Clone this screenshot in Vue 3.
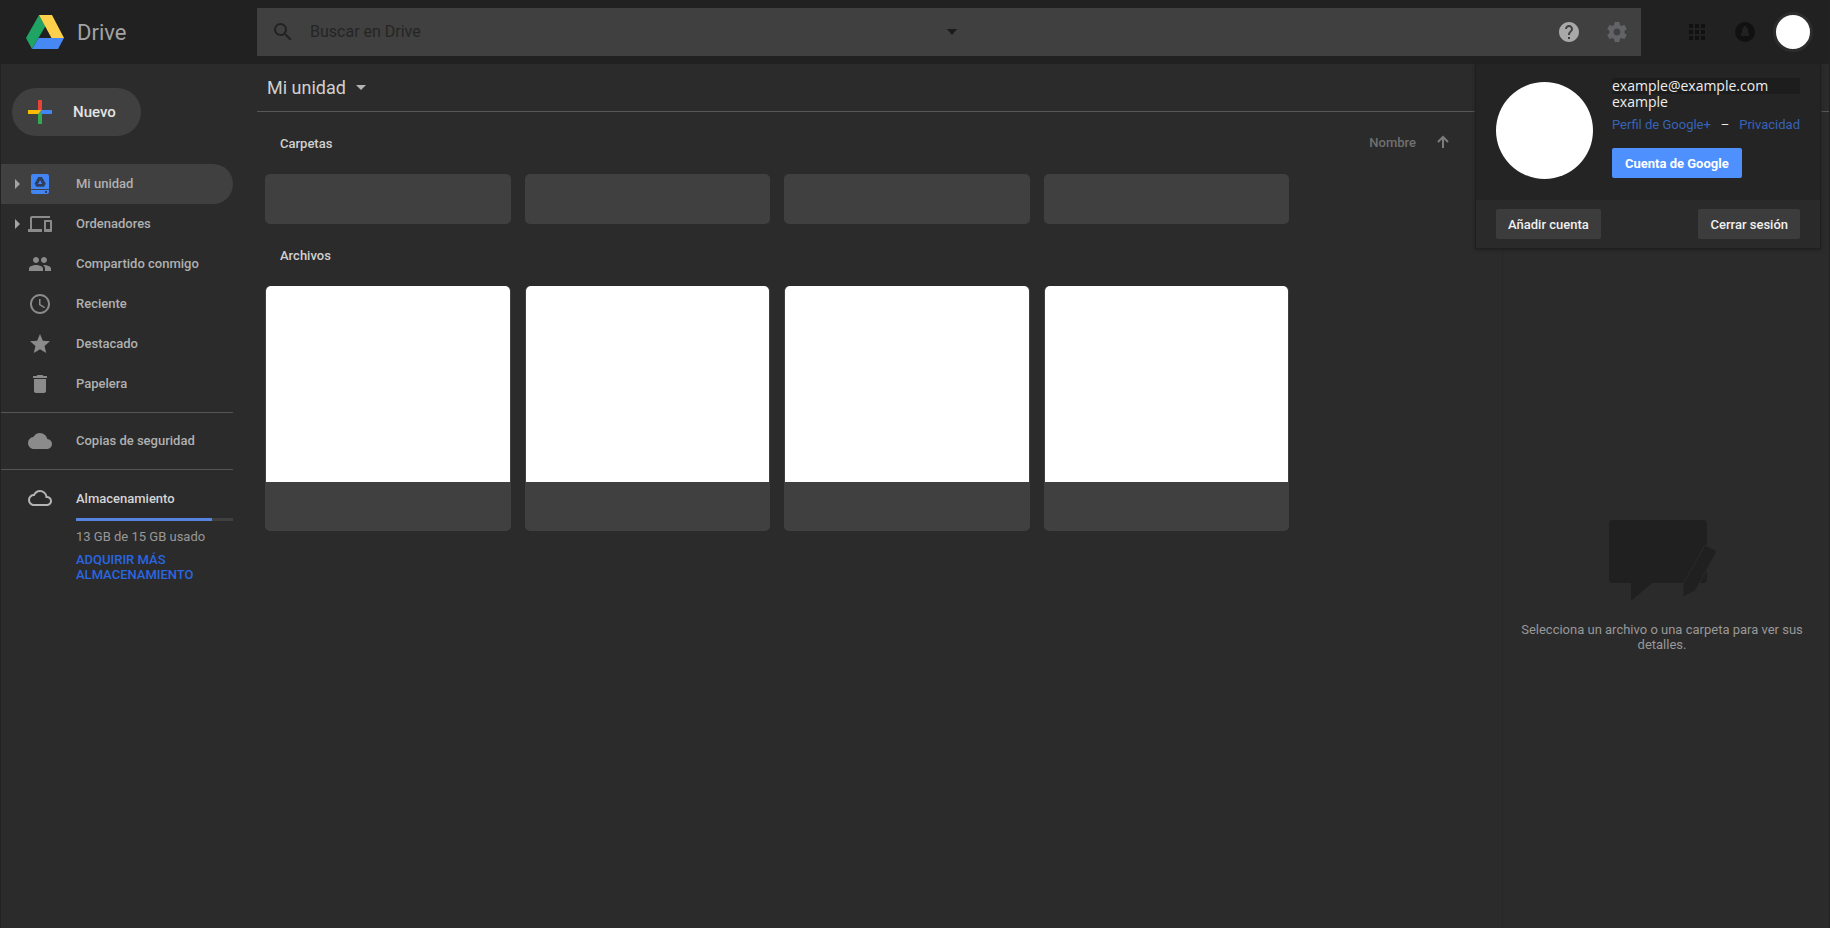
<script setup>
import { ref } from 'vue'

const query = ref('')
const used = 13
const total = 15

const navItems = [
  { label: 'Mi unidad', icon: 'drive', expandable: true, active: true },
  { label: 'Ordenadores', icon: 'devices', expandable: true },
  { label: 'Compartido conmigo', icon: 'people' },
  { label: 'Reciente', icon: 'clock' },
  { label: 'Destacado', icon: 'star' },
  { label: 'Papelera', icon: 'trash' }
]

const icons = {
  devices: 'M4 6h18V4H4c-1.100 0-2 .9-2 2v11H0v3h14v-3H4V6zm19 2h-6c-.55 0-1 .45-1 1v10c0 .55.45 1 1 1h6c.55 0 1-.45 1-1V9c0-.55-.45-1-1-1zm-1 9h-4v-7h4v7z',
  people: 'M16 11c1.660 0 2.990-1.340 2.990-3S17.660 5 16 5s-3 1.340-3 3 1.340 3 3 3zm-8 0c1.660 0 2.990-1.340 2.990-3S9.660 5 8 5 5 6.340 5 8s1.340 3 3 3zm0 2c-2.330 0-7 1.170-7 3.500V19h14v-2.500c0-2.330-4.670-3.500-7-3.500zm8 0c-.29 0-.62.02-.97.05 1.160.840 1.970 1.970 1.970 3.450V19h6v-2.500c0-2.330-4.670-3.500-7-3.500z',
  clock: 'M11.990 2C6.470 2 2 6.480 2 12s4.470 10 9.990 10C17.520 22 22 17.520 22 12S17.520 2 11.990 2zM12 20c-4.420 0-8-3.580-8-8s3.580-8 8-8 8 3.580 8 8-3.580 8-8 8zm.5-13H11v6l5.250 3.150.750-1.230-4.500-2.670z',
  star: 'M12 17.270L18.180 21l-1.640-7.030L22 9.240l-7.190-.61L12 2 9.190 8.630 2 9.240l5.460 4.730L5.820 21z',
  trash: 'M6 19c0 1.100.9 2 2 2h8c1.100 0 2-.9 2-2V7H6v12zM19 4h-3.500l-1-1h-5l-1 1H5v2h14V4z'
}
</script>

<template>
  <div class="page">
    <header class="topbar">
      <a class="brand" href="#">
        <svg class="logo" viewBox="0 0 38 34" aria-hidden="true">
          <path fill="#1fa463" d="M13 0 0 23l6 11 13.500-23z" />
          <path fill="#ffd04b" d="M13 0h13l12 23H25.500z" />
          <path fill="#4688f4" d="M12.500 23H38l-6 11H6z" />
        </svg>
        <span>Drive</span>
      </a>
      <form class="search" @submit.prevent>
        <button class="icon-button submit" type="submit" aria-label="Buscar">
          <svg viewBox="0 0 24 24" width="24" height="24" fill="#222"><path d="M15.500 14h-.79l-.28-.27A6.470 6.470 0 0 0 16 9.500 6.500 6.500 0 1 0 9.500 16c1.610 0 3.090-.59 4.230-1.570l.27.28v.79l5 4.990L20.490 19l-4.990-5zm-6 0C7.010 14 5 11.990 5 9.500S7.010 5 9.500 5 14 7.010 14 9.500 11.990 14 9.500 14z" /></svg>
        </button>
        <input v-model="query" type="text" placeholder="Buscar en Drive" aria-label="Buscar en Drive" />
        <button class="icon-button options" type="button" aria-label="Opciones de búsqueda">
          <svg viewBox="0 0 10 6" width="10" height="6" fill="#1c1c1c"><path d="M0 0h10L5 6z" /></svg>
        </button>
        <span class="search-tools">
          <button class="icon-button" type="button" aria-label="Ayuda">
            <svg viewBox="0 0 24 24" width="24" height="24" fill="#a8a8a8"><path d="M12 2C6.480 2 2 6.480 2 12s4.480 10 10 10 10-4.480 10-10S17.520 2 12 2zm1 17h-2v-2h2v2zm2.070-7.750-.9.920C13.450 12.900 13 13.500 13 15h-2v-.5c0-1.100.45-2.100 1.170-2.830l1.240-1.260c.37-.36.59-.86.59-1.410 0-1.100-.9-2-2-2s-2 .9-2 2H8c0-2.210 1.790-4 4-4s4 1.790 4 4c0 .88-.36 1.680-.93 2.250z" /></svg>
          </button>
          <button class="icon-button" type="button" aria-label="Configuración">
            <svg viewBox="0 0 24 24" width="24" height="24" fill="#626366"><path d="M19.430 12.980c.04-.32.07-.64.07-.98s-.03-.66-.07-.98l2.110-1.650c.19-.15.24-.42.12-.64l-2-3.460c-.12-.22-.39-.3-.61-.22l-2.490 1c-.52-.4-1.080-.73-1.690-.98l-.38-2.650A.488.488 0 0 0 14 2h-4c-.25 0-.46.18-.49.42l-.38 2.650c-.61.25-1.170.59-1.690.98l-2.490-1c-.23-.09-.49 0-.61.22l-2 3.460c-.13.22-.07.49.12.64l2.110 1.650c-.04.32-.07.65-.07.98s.03.66.07.98l-2.110 1.650c-.19.15-.24.42-.12.64l2 3.460c.12.22.39.3.61.22l2.490-1c.52.4 1.080.73 1.690.98l.38 2.650c.03.24.24.42.49.42h4c.25 0 .46-.18.49-.42l.38-2.650c.61-.25 1.170-.59 1.690-.98l2.490 1c.23.09.49 0 .61-.22l2-3.460c.12-.22.07-.49-.12-.64l-2.110-1.650zM12 15.500c-1.930 0-3.500-1.570-3.500-3.500s1.570-3.500 3.500-3.500 3.500 1.570 3.500 3.500-1.570 3.500-3.500 3.500z" /></svg>
          </button>
        </span>
      </form>
      <div class="account-tools">
        <button class="icon-button" type="button" aria-label="Aplicaciones de Google">
          <svg viewBox="0 0 24 24" width="24" height="24" fill="#111"><path d="M4 4h4v4H4zm6 0h4v4h-4zm6 0h4v4h-4zM4 10h4v4H4zm6 0h4v4h-4zm6 0h4v4h-4zM4 16h4v4H4zm6 0h4v4h-4zm6 0h4v4h-4z" /></svg>
        </button>
        <button class="icon-button" type="button" aria-label="Notificaciones">
          <svg viewBox="0 0 24 24" width="24" height="24"><circle cx="12" cy="12" r="10" fill="#111" /><path fill="#212121" d="M8 16v-2.500l1-1V10c0-1.500.8-2.500 2-2.800V6h2v1.200c1.200.3 2 1.300 2 2.800v2.500l1 1V16z" /></svg>
        </button>
        <button class="avatar-button" type="button" aria-label="Cuenta"></button>
      </div>
    </header>

    <div class="body">
      <aside class="sidebar">
        <button class="new-button" type="button">
          <svg viewBox="0 0 24 24" width="24" height="24" aria-hidden="true">
            <path fill="#34a853" d="M10 12h4v12h-4z" />
            <path fill="#fbbc05" d="M0 10h14l-4 4H0z" />
            <path fill="#ea4335" d="M10 0h4v10h-4z" />
            <path fill="#4285f4" d="M14 10h10v4H14l-2-2z" />
          </svg>
          <span>Nuevo</span>
        </button>
        <nav>
          <a v-for="item in navItems" :key="item.label" class="nav-item" :class="{ active: item.active }" href="#">
            <svg class="caret" :class="{ shown: item.expandable }" viewBox="0 0 5 10" width="5" height="10" fill="#a4a4a4"><path d="M0 0l5 5-5 5z" /></svg>
            <svg v-if="item.icon === 'drive'" class="nav-icon" viewBox="0 0 24 24" width="24" height="24">
              <path fill="#4285f4" d="M5 2h14a2 2 0 0 1 2 2v13H3V4a2 2 0 0 1 2-2zM3 18h18v2a2 2 0 0 1-2 2H5a2 2 0 0 1-2-2z" />
              <path fill="#30405c" fill-rule="evenodd" d="M10.300 5h3.600l3.900 6.500-1.800 3.200H8.300l-1.700-3.100zm1.800 3.200L10 12h4.200zM17 19h2v2h-2z" />
            </svg>
            <svg v-else class="nav-icon" viewBox="0 0 24 24" width="24" height="24" fill="#8b8b8b"><path :d="icons[item.icon]" /></svg>
            <span>{{ item.label }}</span>
          </a>
        </nav>
        <div class="nav-section">
          <a class="nav-item" href="#">
            <svg class="caret" viewBox="0 0 5 10" width="5" height="10" />
            <svg class="nav-icon" viewBox="0 0 24 24" width="24" height="24" fill="#8b8b8b"><path d="M19.350 10.040A7.490 7.490 0 0 0 12 4C9.110 4 6.600 5.640 5.350 8.040A5.994 5.994 0 0 0 0 14c0 3.310 2.690 6 6 6h13c2.760 0 5-2.240 5-5 0-2.640-2.050-4.780-4.650-4.960z" /></svg>
            <span>Copias de seguridad</span>
          </a>
        </div>
        <div class="nav-section">
          <a class="nav-item storage" href="#">
            <svg class="caret" viewBox="0 0 5 10" width="5" height="10" />
            <svg class="nav-icon" viewBox="0 0 24 24" width="24" height="24" fill="#b4b4b4"><path d="M19.350 10.040A7.490 7.490 0 0 0 12 4C9.110 4 6.600 5.640 5.350 8.040A5.994 5.994 0 0 0 0 14c0 3.310 2.690 6 6 6h13c2.760 0 5-2.240 5-5 0-2.640-2.050-4.780-4.650-4.960zM19 18H6c-2.210 0-4-1.790-4-4s1.790-4 4-4h.71C7.370 7.690 9.480 6 12 6c3.040 0 5.500 2.460 5.500 5.500v.5H19c1.660 0 3 1.340 3 3s-1.340 3-3 3z" /></svg>
            <span>Almacenamiento</span>
          </a>
          <div class="quota">
            <div class="meter"><div class="meter-fill" :style="{ width: (used / total) * 100 + '%' }"></div></div>
            <p>{{ used }} GB de {{ total }} GB usado</p>
            <a href="#">ADQUIRIR MÁS ALMACENAMIENTO</a>
          </div>
        </div>
      </aside>

      <div class="workspace">
        <div class="pathbar">
          <button class="path-button" type="button">
            <span>Mi unidad</span>
            <svg viewBox="0 0 10 5" width="10" height="5" fill="#b4b4b4"><path d="M0 0h10L5 5z" /></svg>
          </button>
        </div>
        <div class="columns">
          <main class="listing">
            <div class="section-head">
              <h2>Carpetas</h2>
              <button class="sort" type="button">
                <span>Nombre</span>
                <svg viewBox="0 0 14 14" width="14" height="14" fill="none" stroke="#7c7c7c" stroke-width="2"><path d="M7 13V2M2 7l5-5 5 5" /></svg>
              </button>
            </div>
            <div class="cards">
              <div v-for="n in 4" :key="n" class="folder"></div>
            </div>
            <div class="section-head">
              <h2>Archivos</h2>
            </div>
            <div class="cards">
              <div v-for="n in 4" :key="n" class="file"><div class="thumb"></div></div>
            </div>
          </main>
          <aside class="details">
            <svg viewBox="0 0 107 81" width="107" height="81" fill="#202020" aria-hidden="true">
              <path d="M4 0h90a4 4 0 0 1 4 4v55a4 4 0 0 1-4 4H43L22 81V63H4a4 4 0 0 1-4-4V4a4 4 0 0 1 4-4z" />
              <path stroke="#2b2b2b" stroke-width="1" d="m96 25 12 6-22 40-12 6v-13z" />
            </svg>
            <p>Selecciona un archivo o una carpeta para ver sus detalles.</p>
          </aside>
        </div>
      </div>
    </div>

    <section class="account-card" aria-label="Cuenta de Google">
      <div class="profile">
        <div class="portrait"></div>
        <div class="profile-info">
          <div class="email">example@example.com</div>
          <div class="name">example</div>
          <div class="links"><a href="#">Perfil de Google+</a><span>–</span><a href="#">Privacidad</a></div>
          <button class="primary" type="button">Cuenta de Google</button>
        </div>
      </div>
      <div class="account-actions">
        <button type="button">Añadir cuenta</button>
        <button type="button">Cerrar sesión</button>
      </div>
    </section>
  </div>
</template>

<style>
body {
  background: #2b2b2b;
}
</style>

<style scoped>
.page {
  position: relative;
  display: flex;
  flex-direction: column;
  min-height: 100vh;
  box-sizing: border-box;
  border-right: 1px solid #222;
  border-left: 1px solid #222;
  background: #2b2b2b;
  color: #d0d0d0;
  font: 13px/15px Roboto, sans-serif;
}
button {
  border: 0;
  padding: 0;
  background: none;
  color: inherit;
  font: inherit;
}
a {
  color: inherit;
  text-decoration: none;
}
h2,
p {
  margin: 0;
}
svg {
  display: block;
  flex: none;
}

.topbar {
  display: flex;
  align-items: center;
  height: 64px;
  background: #212121;
}
.brand {
  display: flex;
  align-items: center;
  gap: 13px;
  box-sizing: border-box;
  width: 256px;
  padding-left: 25px;
  color: #a3a3a3;
  font-size: 22px;
  line-height: 28px;
}
.brand span {
  padding-top: 2px;
}
.logo {
  width: 38px;
  height: 34px;
}
.search {
  display: flex;
  flex: 1;
  align-items: center;
  height: 48px;
  background: #404040;
}
.icon-button {
  display: flex;
  align-items: center;
  justify-content: center;
  width: 48px;
  height: 48px;
}
.submit {
  width: 52px;
}
.search input {
  width: 632px;
  padding: 0 0 0 1px;
  border: 0;
  background: none;
  color: #222;
  font: 16px/20px Roboto, sans-serif;
  outline: none;
}
.search input::placeholder {
  color: #252525;
  opacity: 1;
}
.options {
  width: 20px;
}
.search-tools {
  display: flex;
  margin-left: auto;
}
.account-tools {
  display: flex;
  align-items: center;
  padding: 0 16px 0 32px;
}
.avatar-button {
  width: 40px;
  height: 40px;
  margin-left: 4px;
  border: 3px solid #2d2d2d;
  border-radius: 50%;
  background: #fff;
}

.body {
  display: flex;
  flex: 1;
}
.sidebar {
  width: 232px;
  flex: none;
  margin-right: 24px;
  padding-top: 24px;
}
.new-button {
  display: flex;
  align-items: center;
  gap: 21px;
  height: 48px;
  margin: 0 0 28px 11px;
  padding: 0 25px 0 16px;
  border-radius: 24px;
  background: #404040;
  color: #e4e4e4;
  font-size: 15px;
  font-weight: 500;
}
.nav-item {
  display: flex;
  align-items: center;
  height: 40px;
  padding-left: 14px;
  border-radius: 0 20px 20px 0;
  color: #b0b0b0;
  font-weight: 500;
}
.nav-item span {
  padding-bottom: 2px;
}
.nav-item.active {
  background: #404040;
}
.caret {
  visibility: hidden;
}
.caret.shown {
  visibility: visible;
}
.nav-icon {
  margin: 0 24px 0 8px;
}
.nav-section {
  margin-top: 8px;
  padding-top: 8px;
  border-top: 1px solid #555;
}
.nav-item.storage {
  color: #d4d4d4;
}
.storage span {
  padding-bottom: 0;
}
.quota {
  padding-left: 75px;
  color: #989898;
}
.meter {
  height: 3px;
  margin-bottom: 8px;
  background: #404040;
}
.meter-fill {
  height: 3px;
  background: #5585e0;
}
.quota a {
  display: block;
  width: 130px;
  margin-top: 8px;
  color: #2a66e0;
  font-weight: 500;
}

.workspace {
  display: flex;
  flex: 1;
  flex-direction: column;
  min-width: 0;
}
.pathbar {
  display: flex;
  align-items: center;
  height: 47px;
  padding-left: 10px;
  border-bottom: 1px solid #575757;
}
.path-button {
  display: flex;
  align-items: center;
  gap: 10px;
  color: #d0d0d0;
  font-size: 18px;
  line-height: 24px;
}
.columns {
  display: flex;
  flex: 1;
}
.listing {
  flex: 1;
  min-width: 0;
  padding: 0 52px 0 8px;
}
.section-head {
  display: flex;
  align-items: center;
  justify-content: space-between;
  height: 62px;
  padding-left: 15px;
}
h2 {
  font-size: 13px;
  font-weight: 500;
}
.sort {
  display: flex;
  align-items: center;
  gap: 20px;
  padding-bottom: 2px;
  color: #707070;
  font-weight: 500;
}
.cards {
  display: grid;
  grid-template-columns: repeat(4, 1fr);
  gap: 14px;
  max-width: 1024px;
}
.folder {
  height: 50px;
  border-radius: 5px;
  background: #404040;
}
.file {
  height: 245px;
  box-sizing: border-box;
  padding: 0 1px;
  border-radius: 5px;
  background: #404040;
}
.thumb {
  height: 196px;
  border-radius: 5px 5px 0 0;
  background: #fff;
}
.details {
  display: flex;
  flex-direction: column;
  align-items: center;
  justify-content: center;
  gap: 21px;
  box-sizing: border-box;
  width: 327px;
  flex: none;
  padding: 132px 22px 0 14px;
  border-left: 1px solid #272727;
  color: #989898;
  text-align: center;
}

.account-card {
  position: absolute;
  top: 64px;
  right: 8px;
  box-sizing: border-box;
  width: 346px;
  border: 1px solid #1f1f1f;
  border-top: 0;
  background: #2a2a2a;
  box-shadow: 0 1px 3px #1f1f1f;
}
.profile {
  display: flex;
  gap: 19px;
  padding: 14px 20px 21px;
  background: #242424;
}
.portrait {
  width: 97px;
  height: 97px;
  flex: none;
  margin-top: 4px;
  border-radius: 50%;
  background: #fff;
}
.profile-info {
  flex: 1;
  color: #eee;
}
.email,
.name {
  font: 14px/16px "Open Sans", "Noto Sans", sans-serif;
}
.email {
  background: #1d1d1d;
}
.links {
  display: flex;
  justify-content: space-between;
  margin-top: 7px;
}
.links a {
  color: #3763b5;
}
.primary {
  height: 30px;
  margin-top: 16px;
  padding: 0 13px;
  border-radius: 2px;
  background: #4d90fe;
  color: #fff;
  font-weight: 700;
}
.account-actions {
  display: flex;
  justify-content: space-between;
  padding: 9px 20px;
}
.account-actions button {
  height: 30px;
  padding: 0 12px;
  border-radius: 2px;
  background: #3c3c3c;
  color: #f0f0f0;
  font-weight: 500;
}
</style>
